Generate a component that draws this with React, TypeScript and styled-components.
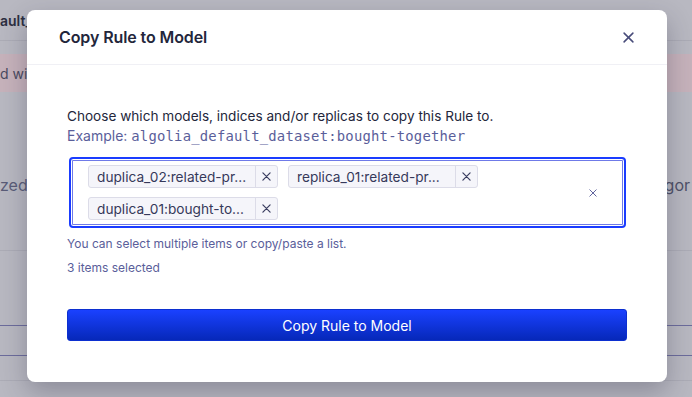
import React from 'react';
import styled, { createGlobalStyle } from 'styled-components';

const GlobalStyle = createGlobalStyle`
  html, body {
    margin: 0;
    padding: 0;
    width: 692px;
    height: 397px;
    overflow: hidden;
    font-family: Inter, "Noto Sans", "Liberation Sans", sans-serif;
    -webkit-font-smoothing: antialiased;
  }
`;

// --- Backdrop (page behind the dimmed overlay) ---
const Page = styled.div`
  position: relative;
  width: 692px;
  height: 397px;
  background: #b8b8c1;
  display: flex;
  flex-direction: column;
  overflow: hidden;
`;

const BackRow = styled.div<{ $h: number; $line?: string; $bg?: string }>`
  height: ${(p) => p.$h}px;
  flex: none;
  display: flex;
  align-items: center;
  justify-content: space-between;
  background: ${(p) => p.$bg || 'transparent'};
  border-bottom: ${(p) => (p.$line ? `1px solid ${p.$line}` : 'none')};
  box-sizing: border-box;
  white-space: nowrap;
`;

const BackText = styled.span<{ $size: number; $bold?: boolean; $color?: string }>`
  font-size: ${(p) => p.$size}px;
  font-weight: ${(p) => (p.$bold ? 600 : 400)};
  color: ${(p) => p.$color || '#4f5168'};
`;

const BackRight = styled.span`
  padding-right: 2px;
  color: #4f5168;
  font-size: 16px;
`;

// --- Modal ---
const Overlay = styled.div`
  position: absolute;
  inset: 0;
  display: flex;
  justify-content: center;
  align-items: flex-start;
  padding-top: 10px;
  box-sizing: border-box;
`;

const Modal = styled.div`
  width: 640px;
  background: #ffffff;
  border-radius: 8px;
  box-shadow: 0 10px 26px rgba(35, 38, 59, 0.3);
  display: flex;
  flex-direction: column;
  transform: translateX(1px);
`;

const Header = styled.div`
  height: 55px;
  box-sizing: border-box;
  padding: 0 32px;
  display: flex;
  align-items: center;
  justify-content: space-between;
  border-bottom: 1px solid #f0f0f5;
`;

const Title = styled.h2`
  margin: 0;
  font-size: 16px;
  font-weight: 600;
  color: #23263b;
  letter-spacing: -0.1px;
`;

const IconButton = styled.button`
  border: none;
  background: none;
  padding: 0;
  width: 16px;
  height: 16px;
  display: flex;
  align-items: center;
  justify-content: center;
  color: #484c7a;
  cursor: pointer;
  margin-right: -1px;
`;

const Body = styled.div`
  padding: 41px 40px 41px;
  display: flex;
  flex-direction: column;
`;

const Lead = styled.p`
  margin: 0;
  font-size: 13.6px;
  line-height: 20px;
  color: #23263b;
`;

const Example = styled.p`
  margin: 0;
  font-size: 14px;
  line-height: 19px;
  color: #5a5e9a;
`;

const Code = styled.code`
  font-family: "DejaVu Sans Mono", "Liberation Mono", monospace;
  font-size: 13.9px;
  line-height: 19px;
  color: #5a5e9a;
  letter-spacing: 0.2px;
`;

const Field = styled.div`
  margin: 11px 1px 0 2px;
  height: 71px;
  box-sizing: border-box;
  border: 2px solid #1a3cff;
  border-radius: 4px;
  box-shadow: inset 0 0 0 1px #ffffff, inset 0 0 0 2px #6f7ae8;
  padding: 6px 12px 0 17px;
  display: flex;
  align-items: flex-start;
`;

const Chips = styled.div`
  flex: 1;
  display: flex;
  flex-wrap: wrap;
  gap: 9px 10px;
`;

const Chip = styled.div`
  display: flex;
  align-items: stretch;
  height: 23px;
  box-sizing: border-box;
  border: 1px solid #dcdce8;
  border-radius: 3px;
  background: #f5f5fa;
  color: #36395a;
  font-size: 13.7px;
`;

const ChipLabel = styled.span`
  width: 166px;
  box-sizing: border-box;
  padding-left: 8px;
  display: flex;
  align-items: center;
`;

const ChipRemove = styled.span`
  width: 21px;
  border-left: 1px solid #dcdce8;
  display: flex;
  align-items: center;
  justify-content: center;
  color: #3a3d60;
`;

const ClearAll = styled.span`
  align-self: center;
  margin-right: 15px;
  margin-top: -6px;
  color: #5a5e9a;
  display: flex;
`;

const Hint = styled.p<{ $top: number }>`
  margin: ${(p) => p.$top}px 0 0;
  font-size: 12px;
  line-height: 16px;
  color: #5a5e9a;
`;

const PrimaryButton = styled.button`
  margin-top: 33px;
  height: 32px;
  border: 1px solid #0c2fd0;
  border-radius: 3px;
  background: linear-gradient(180deg, #1a41ff 0%, #0628b9 100%);
  color: #ffffff;
  font-family: inherit;
  font-size: 14px;
  cursor: pointer;
`;

const Cross: React.FC<{ size: number; stroke?: number }> = ({ size, stroke = 1.6 }) => (
  <svg width={size} height={size} viewBox="0 0 10 10" fill="none">
    <path d="M1 1L9 9M9 1L1 9" stroke="currentColor" strokeWidth={stroke} strokeLinecap="round" />
  </svg>
);

const chips = [
  'duplica_02:related-pr...',
  'replica_01:related-pr...',
  'duplica_01:bought-to...',
];

export default function App() {
  return (
    <>
      <GlobalStyle />
      <Page>
        <BackRow $h={41} $line="#acacb6">
          <BackText $size={14} $bold $color="#2c2e40">ault_</BackText>
        </BackRow>
        <BackRow $h={13} />
        <BackRow $h={38} $bg="#c6b2bb">
          <BackText $size={14} $color="#4a4a60">d wit</BackText>
        </BackRow>
        <BackRow $h={70} />
        <BackRow $h={46}>
          <BackText $size={16} $color="#5a5c78">zed r</BackText>
          <BackRight>gor</BackRight>
        </BackRow>
        <BackRow $h={43} $line="#acacb6" />
        <BackRow $h={75} $line="#6c6c9c" />
        <BackRow $h={30} $line="#6c6c9c" />
        <BackRow $h={25} $line="#acacb6" />
        <Overlay>
          <Modal>
            <Header>
              <Title>Copy Rule to Model</Title>
              <IconButton aria-label="Close">
                <Cross size={11} stroke={1.4} />
              </IconButton>
            </Header>
            <Body>
              <Lead>Choose which models, indices and/or replicas to copy this Rule to.</Lead>
              <Example>
                Example: <Code>algolia_default_dataset:bought-together</Code>
              </Example>
              <Field>
                <Chips>
                  {chips.map((c) => (
                    <Chip key={c}>
                      <ChipLabel>{c}</ChipLabel>
                      <ChipRemove>
                        <Cross size={9} stroke={1.35} />
                      </ChipRemove>
                    </Chip>
                  ))}
                </Chips>
                <ClearAll>
                  <Cross size={8} stroke={1.2} />
                </ClearAll>
              </Field>
              <Hint $top={8}>You can select multiple items or copy/paste a list.</Hint>
              <Hint $top={8}>3 items selected</Hint>
              <PrimaryButton>Copy Rule to Model</PrimaryButton>
            </Body>
          </Modal>
        </Overlay>
      </Page>
    </>
  );
}
